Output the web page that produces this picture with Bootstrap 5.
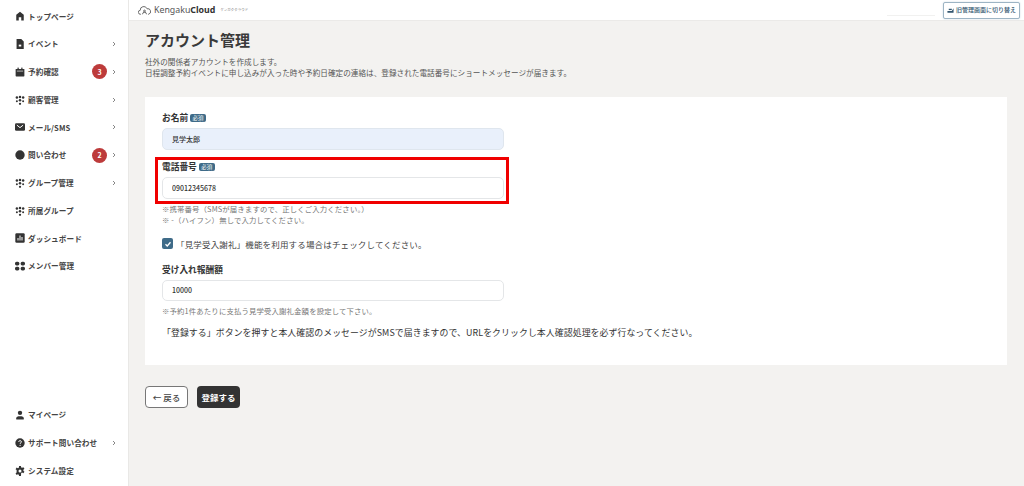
<!DOCTYPE html>
<html lang="ja"><head><meta charset="utf-8"><title>アカウント管理</title>
<link href="https://cdn.jsdelivr.net/npm/bootstrap@5.3.0/dist/css/bootstrap.min.css" rel="stylesheet">
<style>
html,body{height:486px;overflow:hidden}
body{font-family:"Noto Sans CJK JP","Noto Sans",sans-serif;background:#f3f2f0;color:#333;font-size:8px}
.shell{height:486px}
.side{width:129px;background:#fff;border-right:1px solid #e9e8e6;padding:2.5px 0 1.5px;flex:none}
.sitem{height:27.75px;padding:0 12.5px 0 15px;font-size:7.6px;font-weight:700;color:#444;letter-spacing:.1px;gap:3px;text-decoration:none}
.sitem svg.ico{width:10px;height:10px;flex:none;fill:#333}
.chev{width:4px;height:6px;fill:none;stroke:#888;stroke-width:1;flex:none}
.cnt{width:15px;height:15px;border-radius:50%;background:#bd3b3b;color:#fff;font-size:7px;font-weight:700;margin-right:1.5px}
.topb{height:21px;background:#fff;border-bottom:1px solid #ebeae8;padding:0 4px 0 9px}
.logom{margin-right:3px}
.logot{font-family:"Noto Sans",sans-serif;font-size:8.8px;color:#555;line-height:1}
.logot b{color:#333}
.kana{font-size:3.5px;color:#777;letter-spacing:0;margin-left:5px}
.faint{width:48px;height:1px;background:#f1f1f0;margin-top:11px}
.swbtn{font-size:6px;font-weight:500;color:#33566f;border:1px solid #9db4c4;border-radius:2px;background:#fff;height:17px;padding:0 3px;gap:2px;box-shadow:0 0 2px #ccd8e0;line-height:1}
.pane{padding:8px 17px 0 16px}
.ttl{font-size:15px;font-weight:700;color:#3a3a3a;line-height:22px;margin:0 0 5px}
.desc{font-size:7.6px;line-height:11px;color:#555;margin:0 0 19px;letter-spacing:.03px}
.fcard{background:#fff;height:268px;padding:16px 17px;position:relative}
.flabel{font-size:8.7px;font-weight:700;color:#333;line-height:10px;margin:0 0 5px;display:flex;align-items:center;gap:2px}
.req{background:#3f6b88;color:#fff;font-size:5.5px;line-height:8px;padding:0 2.5px;border-radius:2px;font-weight:400}
.finput.form-control{width:342px;height:21.5px;min-height:0;font-size:7px;font-weight:500;color:#333;padding:0 9px;border:1px solid #e4e6e8;border-radius:5px;box-shadow:none}
.finput.filled{background:#e9f0fb;border-color:#dfe6ee}
.fgroup{margin-bottom:12.5px}
.hint{font-size:7.4px;line-height:11px;color:#777;margin:4px 0 0;letter-spacing:.13px}
.chk{margin:13px 0 15px 0;font-size:8.5px;line-height:12px;color:#444;gap:2px;letter-spacing:.16px}
.cbox{width:11px;height:11px;border-radius:2px;background:#3f6b88;flex:none;margin-right:1px}
.notice{font-size:8.9px;line-height:12px;color:#333;margin:11px 0 0;letter-spacing:.08px}
.redbox{position:absolute;left:10px;top:60px;width:354px;height:47px;border:3px solid #f00000;pointer-events:none}
.acts{margin-top:21px;gap:9px}
.bk.btn{font-size:8.5px;font-weight:500;height:22px;width:43px;padding:0;border:1px solid #777;background:#fff;color:#444;border-radius:4px}
.sv.btn{font-size:8.5px;font-weight:700;height:22px;width:43px;padding:0;border:0;background:#333;color:#fff;border-radius:4px}
</style></head><body>
<div class="d-flex shell">
<nav class="side d-flex flex-column justify-content-between">
<div>
<a class="sitem d-flex align-items-center"><svg class="ico" viewBox="0 0 16 16"><path d="M8 1 2 6v9h4v-5h4v5h4V6z"/></svg><span class="flex-grow-1">トップページ</span></a>
<a class="sitem d-flex align-items-center"><svg class="ico" viewBox="0 0 16 16"><path d="M2.500 0h7.500l4 4v12H2.500z"/><rect x="6" y="9" width="4" height="3" fill="#fff"/></svg><span class="flex-grow-1">イベント</span><svg class="chev" viewBox="0 0 4 6"><path d="m1 1 2 2-2 2"/></svg></a>
<a class="sitem d-flex align-items-center"><svg class="ico" viewBox="0 0 16 16"><path d="M2 3h12a1 1 0 0 1 1 1v10a1 1 0 0 1-1 1H2a1 1 0 0 1-1-1V4a1 1 0 0 1 1-1z"/><rect x="3" y="6" width="10" height="1" fill="#fff"/><rect x="4" y="1" width="2" height="3"/><rect x="10" y="1" width="2" height="3"/></svg><span class="flex-grow-1">予約確認</span><span class="cnt d-flex align-items-center justify-content-center">3</span><svg class="chev" viewBox="0 0 4 6"><path d="m1 1 2 2-2 2"/></svg></a>
<a class="sitem d-flex align-items-center"><svg class="ico" viewBox="0 0 16 16"><circle cx="3" cy="4" r="2"/><circle cx="8" cy="3" r="2"/><circle cx="13" cy="4" r="2"/><circle cx="3" cy="10" r="1.6"/><circle cx="8" cy="8.5" r="2"/><circle cx="13" cy="10" r="1.6"/><circle cx="8" cy="14" r="1.8"/></svg><span class="flex-grow-1">顧客管理</span><svg class="chev" viewBox="0 0 4 6"><path d="m1 1 2 2-2 2"/></svg></a>
<a class="sitem d-flex align-items-center"><svg class="ico" viewBox="0 0 16 16"><rect x="0" y="2" width="16" height="12" rx="2"/><path d="m3 5 5 4 5-4" fill="none" stroke="#fff" stroke-width="1.6"/></svg><span class="flex-grow-1">メール/SMS</span><svg class="chev" viewBox="0 0 4 6"><path d="m1 1 2 2-2 2"/></svg></a>
<a class="sitem d-flex align-items-center"><svg class="ico" viewBox="0 0 16 16"><circle cx="8" cy="8" r="7.5"/></svg><span class="flex-grow-1">問い合わせ</span><span class="cnt d-flex align-items-center justify-content-center">2</span><svg class="chev" viewBox="0 0 4 6"><path d="m1 1 2 2-2 2"/></svg></a>
<a class="sitem d-flex align-items-center"><svg class="ico" viewBox="0 0 16 16"><circle cx="3" cy="4" r="2"/><circle cx="8" cy="3" r="2"/><circle cx="13" cy="4" r="2"/><circle cx="3" cy="10" r="1.6"/><circle cx="8" cy="8.5" r="2"/><circle cx="13" cy="10" r="1.6"/><circle cx="8" cy="14" r="1.8"/></svg><span class="flex-grow-1">グループ管理</span><svg class="chev" viewBox="0 0 4 6"><path d="m1 1 2 2-2 2"/></svg></a>
<a class="sitem d-flex align-items-center"><svg class="ico" viewBox="0 0 16 16"><circle cx="3" cy="4" r="2"/><circle cx="8" cy="3" r="2"/><circle cx="13" cy="4" r="2"/><circle cx="3" cy="10" r="1.6"/><circle cx="8" cy="8.5" r="2"/><circle cx="13" cy="10" r="1.6"/><circle cx="8" cy="14" r="1.8"/></svg><span class="flex-grow-1">所属グループ</span></a>
<a class="sitem d-flex align-items-center"><svg class="ico" viewBox="0 0 16 16"><rect x="0.5" y="0.5" width="15" height="15" rx="2"/><path d="M4 12V8h1.6v4zM7.2 12V4h1.6v8zM10.4 12V6.5H12V12z" fill="#fff"/></svg><span class="flex-grow-1">ダッシュボード</span></a>
<a class="sitem d-flex align-items-center"><svg class="ico" viewBox="0 0 16 16"><rect x="0" y="1" width="7" height="6" rx="2.500"/><rect x="9" y="1" width="7" height="6" rx="2.500"/><rect x="0" y="9" width="7" height="6" rx="2.500"/><rect x="9" y="9" width="7" height="6" rx="2.500"/></svg><span class="flex-grow-1">メンバー管理</span></a>
</div>
<div>
<a class="sitem d-flex align-items-center"><svg class="ico" viewBox="0 0 16 16"><circle cx="8" cy="4.5" r="3.5"/><path d="M2 15v-2c0-2 2-3 6-3s6 1 6 3v2z"/></svg><span class="flex-grow-1">マイページ</span></a>
<a class="sitem d-flex align-items-center"><svg class="ico" viewBox="0 0 16 16"><circle cx="8" cy="8" r="7.5"/><path d="M5.8 6.2C6 4.8 7 4.2 8.1 4.2c1.300 0 2.200.8 2.200 1.900 0 1.700-2.200 1.600-2.200 3.300" fill="none" stroke="#fff" stroke-width="1.500"/><circle cx="8.100" cy="11.700" r="1" fill="#fff"/></svg><span class="flex-grow-1">サポート問い合わせ</span><svg class="chev" viewBox="0 0 4 6"><path d="m1 1 2 2-2 2"/></svg></a>
<a class="sitem d-flex align-items-center"><svg class="ico" viewBox="0 0 16 16"><path fill-rule="evenodd" d="M6.500 0h3l.4 2.200 1.500.7 2-1.100 1.700 2.500-1.700 1.500v1.700l1.700 1.500-1.700 2.500-2-1.100-1.500.7L9.500 16h-3l-.4-2.200-1.500-.7-2 1.100L.9 11.700l1.700-1.500V6.500L.9 5l1.700-2.500 2 1.100 1.500-.7zM8 5.600a2.400 2.400 0 1 0 0 4.800 2.400 2.400 0 0 0 0-4.800z"/></svg><span class="flex-grow-1">システム設定</span></a>
</div>
</nav>
<div class="flex-grow-1 d-flex flex-column">
<header class="topb d-flex align-items-center">
<div class="d-flex align-items-center flex-grow-1">
<svg class="logom" width="13" height="9" viewBox="0 0 26 18" fill="none" stroke="#555" stroke-width="1.700"><path d="M6 16.500H5a4 4 0 0 1-.5-8A7 7 0 0 1 18 5.500a5.300 5.300 0 0 1 3 11h-1"/><path d="M9 16.500a4 4 0 0 1 8 0"/><circle cx="13" cy="10" r="1.800"/></svg>
<span class="logot">Kengaku<b>Cloud</b></span><span class="kana">ケンガククラウド</span>
</div>
<div class="faint me-2"></div>
<button class="swbtn d-flex align-items-center" type="button"><svg width="7" height="7" viewBox="0 0 16 16" fill="#33566f"><path d="M1 9h10l4-6v10H1z"/><path d="M4 4h7v3H4z"/></svg>旧管理画面に切り替え</button>
</header>
<main class="pane">
<h1 class="ttl">アカウント管理</h1>
<p class="desc">社外の関係者アカウントを作成します。<br>日程調整予約イベントに申し込みが入った時や予約日確定の連絡は、登録された電話番号にショートメッセージが届きます。</p>
<form class="fcard">
<div class="fgroup"><label class="flabel">お名前<span class="req">必須</span></label><input class="form-control finput filled" value="見学太郎"></div>
<div><label class="flabel">電話番号<span class="req">必須</span></label><input class="form-control finput" value="09012345678"></div>
<p class="hint">※携帯番号（SMSが届きますので、正しくご入力ください。）<br>※ -（ハイフン）無しで入力してください。</p>
<div class="chk d-flex align-items-center"><span class="cbox d-flex align-items-center justify-content-center"><svg width="8" height="8" viewBox="0 0 16 16" fill="none" stroke="#fff" stroke-width="2.600"><path d="m3 8.500 3.500 3.500L13 4.500"/></svg></span>「見学受入謝礼」機能を利用する場合はチェックしてください。</div>
<div><label class="flabel">受け入れ報酬額</label><input class="form-control finput" value="10000"></div>
<p class="hint">※予約1件あたりに支払う見学受入謝礼金額を設定して下さい。</p>
<p class="notice">「登録する」ボタンを押すと本人確認のメッセージがSMSで届きますので、URLをクリックし本人確認処理を必ず行なってください。</p>
<div class="redbox"></div>
</form>
<div class="acts d-flex">
<button class="btn bk" type="button">← 戻る</button>
<button class="btn sv" type="button">登録する</button>
</div>
</main>
</div>
</div>
<script src="https://cdn.jsdelivr.net/npm/bootstrap@5.3.0/dist/js/bootstrap.bundle.min.js"></script>
</body></html>
